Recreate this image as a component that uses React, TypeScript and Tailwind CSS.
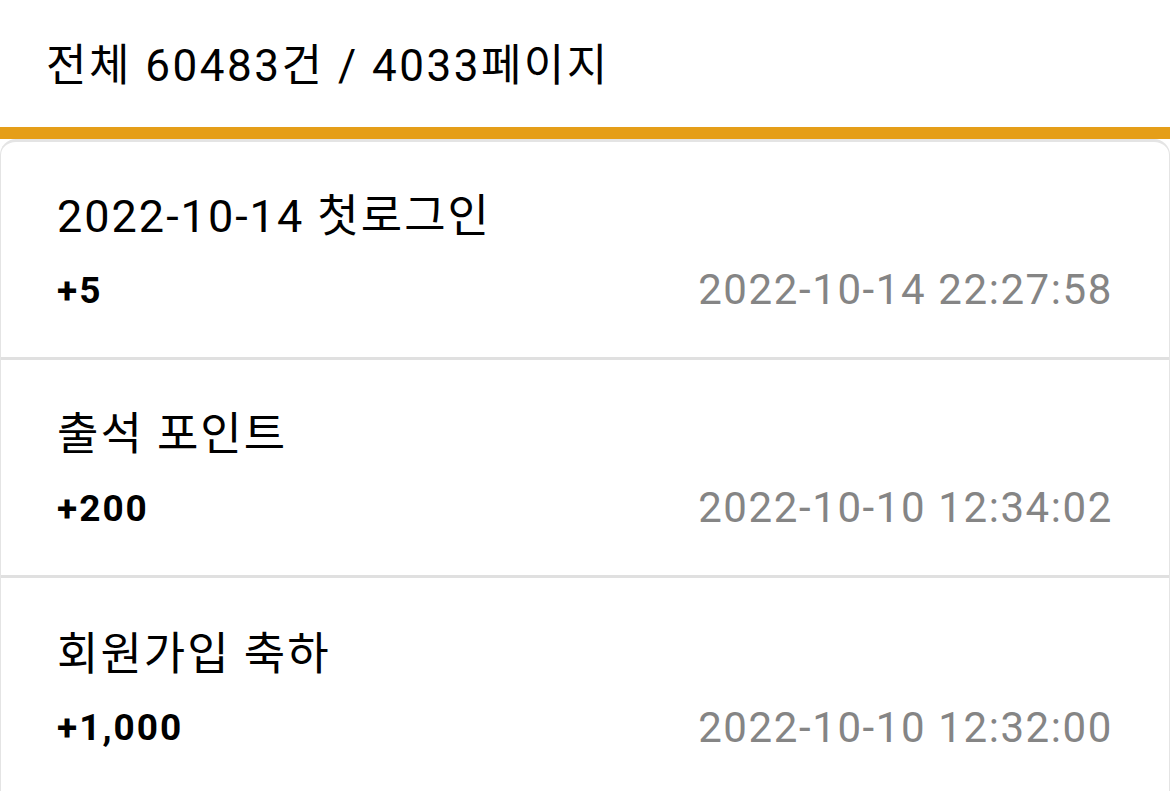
const rows = [
  { title: "2022-10-14 첫로그인", point: "+5", date: "2022-10-14 22:27:58" },
  { title: "출석 포인트", point: "+200", date: "2022-10-10 12:34:02" },
  { title: "회원가입 축하", point: "+1,000", date: "2022-10-10 12:32:00" },
];

export default function App() {
  return (
    <div className="min-h-[791px] bg-white font-['Roboto','Noto_Sans_CJK_KR',sans-serif] text-black">
      <div className="h-[127px] flex items-center px-[46px] pt-1">
        <p className="text-[44px] leading-none tracking-[2.5px]">전체 60483건 / 4033페이지</p>
      </div>
      <div className="h-3 bg-[#E59E18]" />

      <div className="rounded-t-[16px] border-t-[3px] border-x border-[#e4e4e4] bg-white">
        {rows.map((row, i) => (
          <div
            key={row.date}
            className={
              "h-[218px] flex flex-col justify-center pl-[56px] pr-[56px] pt-[6px] " +
              (i < rows.length - 1 ? "border-b-[3px] border-[#e0e0e0]" : "")
            }
          >
            <p className="text-[45px] leading-none tracking-[2px]">{row.title}</p>
            <div className="mt-[30px] flex items-center justify-between">
              <span className="text-[37px] font-bold leading-none tracking-[2px]">{row.point}</span>
              <span className="text-[42px] leading-none tracking-[1.6px] text-[#858585]">{row.date}</span>
            </div>
          </div>
        ))}
      </div>
    </div>
  );
}
